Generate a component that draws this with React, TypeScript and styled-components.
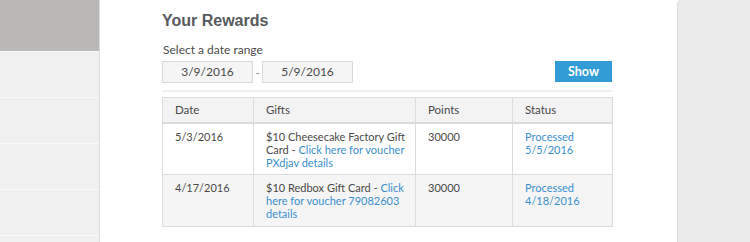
import React, { FC } from 'react';
import styled, { createGlobalStyle } from 'styled-components';

const GlobalStyle = createGlobalStyle`
  html, body {
    margin: 0;
    padding: 0;
    background: #fff;
  }

  body {
    font-family: Lato, 'Noto Sans', sans-serif;
    color: #4a4a4a;
  }
`;

const Page = styled.div`
  display: flex;
  height: 242px;
  overflow: hidden;
`;

const Sidebar = styled.div`
  width: 99px;
  flex-shrink: 0;
  background: #f0f0f0;
  border-right: 1px solid #dcdcdc;
  display: flex;
  flex-direction: column;
`;

const SidebarTop = styled.div`
  height: 51px;
  flex-shrink: 0;
  background: #bab9b8;
  border-bottom: 1px solid #fafafa;
`;

const SidebarItem = styled.div`
  height: 45px;
  flex-shrink: 0;
  border-bottom: 1px solid #fafafa;
`;

const Main = styled.div`
  flex: 1;
  padding: 11px 0 0 62px;
`;

const Content = styled.div`
  width: 450px;
`;

const Title = styled.h1`
  margin: 0;
  font-family: 'Liberation Sans', Arial, sans-serif;
  font-size: 16px;
  font-weight: 700;
  line-height: 20px;
  color: #575a5e;
`;

const Label = styled.p`
  margin: 11px 0 0 1px;
  font-size: 12px;
  line-height: 15px;
  color: #4a4a4a;
`;

const Controls = styled.div`
  display: flex;
  align-items: center;
  margin-top: 4px;
  padding-bottom: 7px;
  border-bottom: 2px solid #f0f0f0;
`;

const DateInput = styled.div`
  width: 89px;
  height: 20px;
  background: #f5f5f5;
  border: 1px solid #d9d9d9;
  font-size: 12px;
  line-height: 20px;
  text-align: center;
  color: #4a4a4a;
`;

const Dash = styled.span`
  width: 9px;
  text-align: center;
  font-size: 11px;
  color: #888;
`;

const ShowButton = styled.button`
  margin-left: auto;
  margin-top: -1px;
  width: 57px;
  height: 21px;
  border: 0;
  padding: 0;
  background: #329cd7;
  color: #fff;
  font-family: Lato, 'Noto Sans', sans-serif;
  font-size: 12.5px;
  font-weight: 700;
`;

const Table = styled.table`
  margin-top: 5px;
  width: 450px;
  table-layout: fixed;
  border-collapse: collapse;
  border: 1px solid #d9d9d9;
  font-size: 11px;
  line-height: 13px;
`;

const Row = styled.tr<{ $bg: string }>`
  background: ${p => p.$bg};
`;

const Th = styled.th<{ $w: number }>`
  width: ${p => p.$w}px;
  box-sizing: border-box;
  height: 25px;
  padding: 0 6px 0 12px;
  text-align: left;
  font-size: 11.5px;
  font-weight: 400;
  color: #4a4a4a;
  border: 1px solid #dcdcdc;
  border-bottom-width: 2px;
`;

const Td = styled.td`
  height: 52px;
  padding: 6px 6px 0 12px;
  vertical-align: top;
  border: 1px solid #dcdcdc;
  box-sizing: border-box;
  color: #4a4a4a;
`;

const Link = styled.a`
  color: #3b8fce;
  text-decoration: none;
`;

const RightPanel = styled.div`
  width: 72px;
  flex-shrink: 0;
  background: #ebebeb;
  border-left: 1px solid #dedede;
  border-top-left-radius: 4px;
`;

type Reward = {
  date: string;
  gift: string;
  link: string;
  points: string;
  status: string;
  statusDate: string;
};

const rewards: Reward[] = [
  {
    date: '5/3/2016',
    gift: '$10 Cheesecake Factory Gift Card - ',
    link: 'Click here for voucher PXdjav details',
    points: '30000',
    status: 'Processed',
    statusDate: '5/5/2016',
  },
  {
    date: '4/17/2016',
    gift: '$10 Redbox Gift Card - ',
    link: 'Click here for voucher 79082603 details',
    points: '30000',
    status: 'Processed',
    statusDate: '4/18/2016',
  },
];

const App: FC = () => {
  return (
    <>
      <GlobalStyle />
      <Page>
        <Sidebar>
          <SidebarTop />
          {[0, 1, 2, 3, 4].map(i => <SidebarItem key={i} />)}
        </Sidebar>

        <Main>
          <Content>
            <Title>Your Rewards</Title>
            <Label>Select a date range</Label>

            <Controls>
              <DateInput>3/9/2016</DateInput>
              <Dash>-</Dash>
              <DateInput>5/9/2016</DateInput>
              <ShowButton>Show</ShowButton>
            </Controls>

            <Table>
              <thead>
                <Row $bg="#f3f3f3">
                  <Th $w={91}>Date</Th>
                  <Th $w={162}>Gifts</Th>
                  <Th $w={97}>Points</Th>
                  <Th $w={100}>Status</Th>
                </Row>
              </thead>
              <tbody>
                {rewards.map((r, i) => (
                  <Row key={r.date} $bg={i % 2 ? '#f5f5f5' : '#fff'}>
                    <Td>{r.date}</Td>
                    <Td>
                      {r.gift}
                      <Link href="#">{r.link}</Link>
                    </Td>
                    <Td>{r.points}</Td>
                    <Td>
                      <Link href="#">{r.status}<br />{r.statusDate}</Link>
                    </Td>
                  </Row>
                ))}
              </tbody>
            </Table>
          </Content>
        </Main>

        <RightPanel />
      </Page>
    </>
  );
};

export default App;
